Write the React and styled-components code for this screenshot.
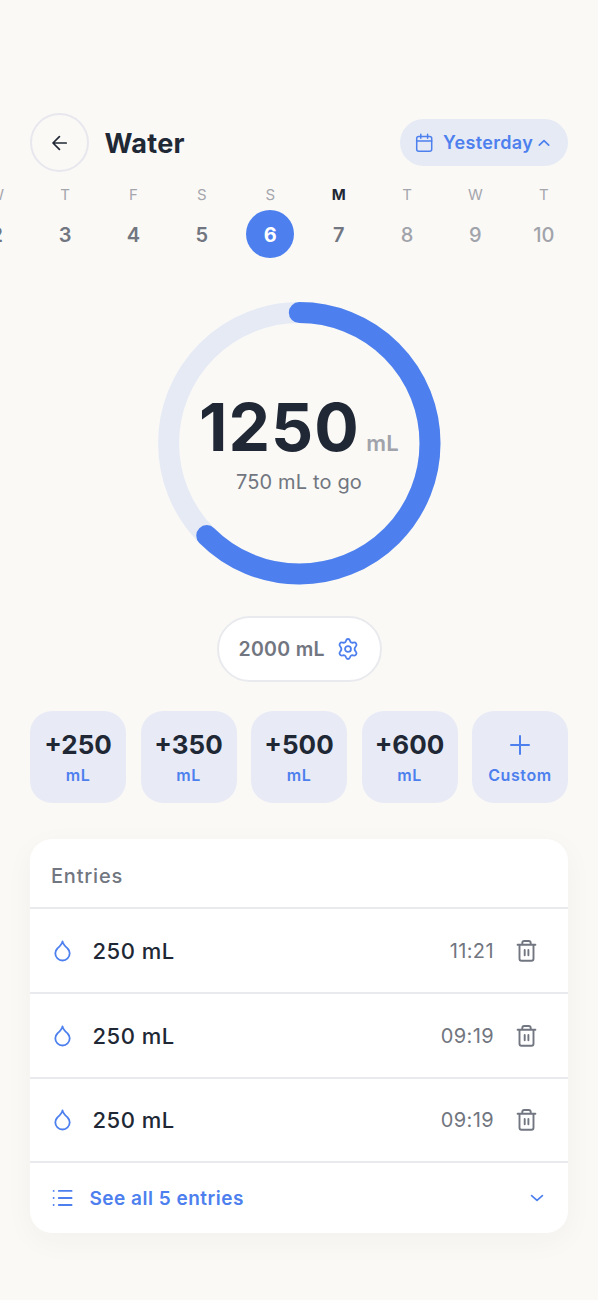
import React from "react";
import styled, { createGlobalStyle } from "styled-components";

const Global = createGlobalStyle`
  * { box-sizing: border-box; }
  body {
    margin: 0;
    background: #faf9f6;
    font-family: Inter, "Liberation Sans", sans-serif;
    font-optical-sizing: none;
    color: #212835;
    overflow: hidden;
  }
  button { font: inherit; color: inherit; border: 0; padding: 0; background: none; text-align: left; }
  svg { display: block; flex: none; fill: none; stroke: currentColor; stroke-linecap: round; stroke-linejoin: round; }
`;

const Screen = styled.main`
  width: 598px;
  height: 1300px;
  padding: 113px 30px 0;
  display: flex;
  flex-direction: column;
  overflow: hidden;
`;

const Header = styled.header`
  display: flex;
  align-items: center;
  height: 59px;
`;

const BackButton = styled.button`
  width: 59px;
  height: 59px;
  border-radius: 50%;
  border: 2px solid #e8e7ee;
  display: grid;
  place-items: center;
`;

const Title = styled.h1`
  margin: 3px 0 0 15.5px;
  font-size: 27px;
  line-height: 34px;
  font-weight: 700;
  letter-spacing: 0.3px;
`;

const DateButton = styled.button`
  margin-left: auto;
  height: 47px;
  width: 168px;
  border-radius: 24px;
  background: #e5eaf5;
  color: #4d80ee;
  display: flex;
  align-items: center;
  padding-left: 15px;
  font-size: 18px;
  font-weight: 570;
  letter-spacing: 0.35px;
`;

const DateLabel = styled.span`
  width: 95px;
  margin-left: 10px;
  white-space: nowrap;
`;

const Week = styled.div`
  display: flex;
  margin: 14px -50px 0 -67.5px;
  height: 73px;
`;

const Day = styled.div`
  flex: 0 0 68.4px;
  display: flex;
  flex-direction: column;
  align-items: center;
`;

const DayName = styled.span`
  font-size: 15px;
  line-height: 18px;
  font-weight: ${(p) => (p.$today ? 700 : 400)};
  color: ${(p) => (p.$today ? "#212835" : "#a5a6ad")};
`;

const DayNumber = styled.span`
  width: 48px;
  height: 48px;
  margin-top: 6px;
  border-radius: 50%;
  display: grid;
  place-items: center;
  padding-top: 2px;
  font-size: 20px;
  font-weight: ${(p) => (p.$selected ? 700 : p.$future ? 520 : 600)};
  background: ${(p) => (p.$selected ? "#4d80ee" : "transparent")};
  color: ${(p) => (p.$selected ? "#fff" : p.$future ? "#a1a3ab" : "#717680")};
`;

const Gauge = styled.section`
  display: grid;
  place-items: center;
  align-self: center;
  width: 283px;
  height: 283px;
  margin-top: 43px;
  > * { grid-area: 1 / 1; }
`;

const Reading = styled.div`
  display: flex;
  flex-direction: column;
  align-items: center;
  padding-bottom: 2px;
`;

const Amount = styled.div`
  display: flex;
  align-items: baseline;
  font-size: 66px;
  line-height: 72px;
  font-weight: 700;
  letter-spacing: 1px;
  font-kerning: none;
  white-space: nowrap;
`;

const AmountUnit = styled.span`
  margin-left: 6.5px;
  font-size: 22px;
  font-weight: 560;
  letter-spacing: 0.2px;
  color: #a1a3ab;
`;

const Remaining = styled.div`
  margin-top: -9px;
  font-size: 20px;
  line-height: 24px;
  letter-spacing: 0.15px;
  color: #717680;
  white-space: nowrap;
`;

const GoalButton = styled.button`
  align-self: center;
  width: 165px;
  height: 66px;
  margin-top: 31px;
  border: 2px solid #e9eaee;
  border-radius: 33px;
  background: #fff;
  display: flex;
  align-items: center;
  padding-left: 20px;
  color: #4d80ee;
`;

const GoalLabel = styled.span`
  width: 98px;
  font-size: 19.5px;
  font-weight: 560;
  letter-spacing: 0.3px;
  color: #717680;
  white-space: nowrap;
`;

const QuickAdd = styled.div`
  display: grid;
  grid-template-columns: repeat(5, 1fr);
  gap: 14.5px;
  margin-top: 29px;
`;

const QuickButton = styled.button`
  height: 92px;
  border-radius: 22px;
  background: #e8ebf6;
  display: flex;
  flex-direction: column;
  align-items: center;
  padding-top: 18px;
  color: #4d80ee;
`;

const QuickValue = styled.span`
  height: 32px;
  display: grid;
  place-items: center;
  font-size: 26px;
  line-height: 32px;
  font-weight: 680;
  color: ${(p) => (p.$accent ? "#4d80ee" : "#212835")};
`;

const QuickUnit = styled.span`
  margin-top: 4px;
  font-size: 16px;
  line-height: 20px;
  font-weight: 570;
  letter-spacing: 0.6px;
`;

const Card = styled.section`
  margin-top: 36px;
  height: 394px;
  border-radius: 22px;
  background: #fff;
  box-shadow: 0 8px 30px rgba(40, 40, 50, 0.04);
`;

const CardTitle = styled.h2`
  margin: 0;
  height: 68px;
  padding: 6px 21px 0;
  display: flex;
  align-items: center;
  font-size: 20px;
  font-weight: 550;
  letter-spacing: 0.8px;
  color: #717680;
`;

const Entry = styled.div`
  height: 84.8px;
  border-top: 2px solid #e9eaee;
  display: flex;
  align-items: center;
  padding: 1px 31px 0 24px;
  color: #717680;
`;

const EntryAmount = styled.span`
  margin-left: 21.5px;
  font-size: 22px;
  font-weight: 550;
  letter-spacing: 0.5px;
  color: #212835;
`;

const EntryTime = styled.time`
  margin-left: auto;
  margin-right: 22px;
  font-size: 20px;
  font-weight: 380;
  font-kerning: none;
  letter-spacing: 0.4px;
`;

const SeeAll = styled.button`
  width: 100%;
  height: 71px;
  border-top: 2px solid #e9eaee;
  display: flex;
  align-items: center;
  justify-content: space-between;
  padding: 1px 24px 0 22px;
  color: #4d80ee;
`;

const SeeAllLabel = styled.span`
  display: flex;
  align-items: center;
  gap: 16.5px;
  font-size: 19px;
  font-weight: 570;
  letter-spacing: 0.5px;
`;

const Drop = styled.svg`
  color: #4d80ee;
`;

const ArrowLeft = () => (
  <svg width="16" height="16" strokeWidth="1.7">
    <path d="M14.2 8H1.5M7.4 1.6 1 8l6.4 6.4" />
  </svg>
);

const CalendarIcon = () => (
  <svg width="18" height="20" strokeWidth="1.5">
    <rect x="1.7" y="3.4" width="15" height="14.8" rx="2" />
    <path d="M1.7 8h15M5.8 1.2v4M12.6 1.2v4" />
  </svg>
);

const Chevron = ({ up, size = 12 }) => (
  <svg width={size} height="8" viewBox={`0 0 ${size} 8`} strokeWidth="1.7">
    <path d={up ? `M1.3 6.2 ${size / 2} 1.6 ${size - 1.3} 6.2` : `M1.6 1.6 ${size / 2} 6.4 ${size - 1.6} 1.6`} />
  </svg>
);

const Gear = () => (
  <svg width="22" height="22" viewBox="0.6 0.6 20.8 20.8" strokeWidth="1.7">
    <path d="M9.1 3.2C9.7 1 12.3 1 12.9 3.2C13.3 4.9 14.4 5.4 16 4.9C18.4 4.3 20 6.7 18.4 8.5C17 10 17 12 18.4 13.5C20 15.3 18.4 17.7 16 17.1C14.4 16.6 13.3 17.1 12.9 18.8C12.3 21 9.7 21 9.1 18.8C8.7 17.1 7.6 16.6 6 17.1C3.6 17.7 2 15.3 3.6 13.5C5 12 5 10 3.6 8.5C2 6.7 3.6 4.3 6 4.9C7.6 5.4 8.7 4.9 9.1 3.2Z" />
    <circle cx="11" cy="11" r="2.8" />
  </svg>
);

const PlusIcon = () => (
  <svg width="20" height="20" strokeWidth="2">
    <path d="M10 1v18M1 10h18" />
  </svg>
);

const DropIcon = () => (
  <Drop width="17" height="22" strokeWidth="1.8">
    <path d="M8.5 1.4C8 4.5 5.8 6.4 3.4 8.5A7.1 7.1 0 0 0 1.3 13.3A7.2 7.2 0 0 0 15.7 13.3A7.1 7.1 0 0 0 13.6 8.5C11.2 6.4 9 4.5 8.5 1.4Z" />
  </Drop>
);

const TrashIcon = () => (
  <svg width="21" height="24" strokeWidth="1.9">
    <path d="M1.6 5.7h17.8M3.5 5.7v14a2 2 0 0 0 2 2h10a2 2 0 0 0 2-2v-14M6.3 5.7V4a2 2 0 0 1 2-2h4.4a2 2 0 0 1 2 2v1.7M8.7 11v5.2M12.4 11v5.2" />
  </svg>
);

const ListIcon = () => (
  <svg width="21" height="18" strokeWidth="1.8">
    <path d="M6.8 1.9h12.8M6.8 9h12.8M6.8 16h12.8M1.6 1.9h.1M1.6 9h.1M1.6 16h.1" />
  </svg>
);

const RADIUS = 130.7;
const LENGTH = 2 * Math.PI * RADIUS;

const Ring = ({ progress }) => (
  <svg width="283" height="283" strokeWidth="21">
    <circle cx="141.3" cy="141.3" r={RADIUS} stroke="#e5eaf5" />
    <circle
      cx="141.3"
      cy="141.3"
      r={RADIUS}
      stroke="#4d80ee"
      strokeDasharray={`${LENGTH * progress} ${LENGTH}`}
      transform="rotate(-90 141.3 141.3)"
    />
  </svg>
);

const days = [
  { name: "W", number: 2 },
  { name: "T", number: 3 },
  { name: "F", number: 4 },
  { name: "S", number: 5 },
  { name: "S", number: 6, selected: true },
  { name: "M", number: 7, today: true },
  { name: "T", number: 8, future: true },
  { name: "W", number: 9, future: true },
  { name: "T", number: 10, future: true },
];

const amounts = [250, 350, 500, 600];
const entries = ["11:21", "09:19", "09:19"];

export default function App() {
  return (
    <>
      <Global />
      <Screen>
        <Header>
          <BackButton aria-label="Back"><ArrowLeft /></BackButton>
          <Title>Water</Title>
          <DateButton>
            <CalendarIcon />
            <DateLabel>Yesterday</DateLabel>
            <Chevron up />
          </DateButton>
        </Header>

        <Week>
          {days.map((d) => (
            <Day key={d.number}>
              <DayName $today={d.today}>{d.name}</DayName>
              <DayNumber $selected={d.selected} $future={d.future}>{d.number}</DayNumber>
            </Day>
          ))}
        </Week>

        <Gauge>
          <Ring progress={1250 / 2000} />
          <Reading>
            <Amount>1250<AmountUnit>mL</AmountUnit></Amount>
            <Remaining>750 mL to go</Remaining>
          </Reading>
        </Gauge>

        <GoalButton>
          <GoalLabel>2000 mL</GoalLabel>
          <Gear />
        </GoalButton>

        <QuickAdd>
          {amounts.map((a) => (
            <QuickButton key={a}>
              <QuickValue>+{a}</QuickValue>
              <QuickUnit>mL</QuickUnit>
            </QuickButton>
          ))}
          <QuickButton>
            <QuickValue $accent><PlusIcon /></QuickValue>
            <QuickUnit>Custom</QuickUnit>
          </QuickButton>
        </QuickAdd>

        <Card>
          <CardTitle>Entries</CardTitle>
          {entries.map((time, i) => (
            <Entry key={i}>
              <DropIcon />
              <EntryAmount>250 mL</EntryAmount>
              <EntryTime>{time}</EntryTime>
              <TrashIcon />
            </Entry>
          ))}
          <SeeAll>
            <SeeAllLabel><ListIcon />See all 5 entries</SeeAllLabel>
            <Chevron size={14} />
          </SeeAll>
        </Card>
      </Screen>
    </>
  );
}
